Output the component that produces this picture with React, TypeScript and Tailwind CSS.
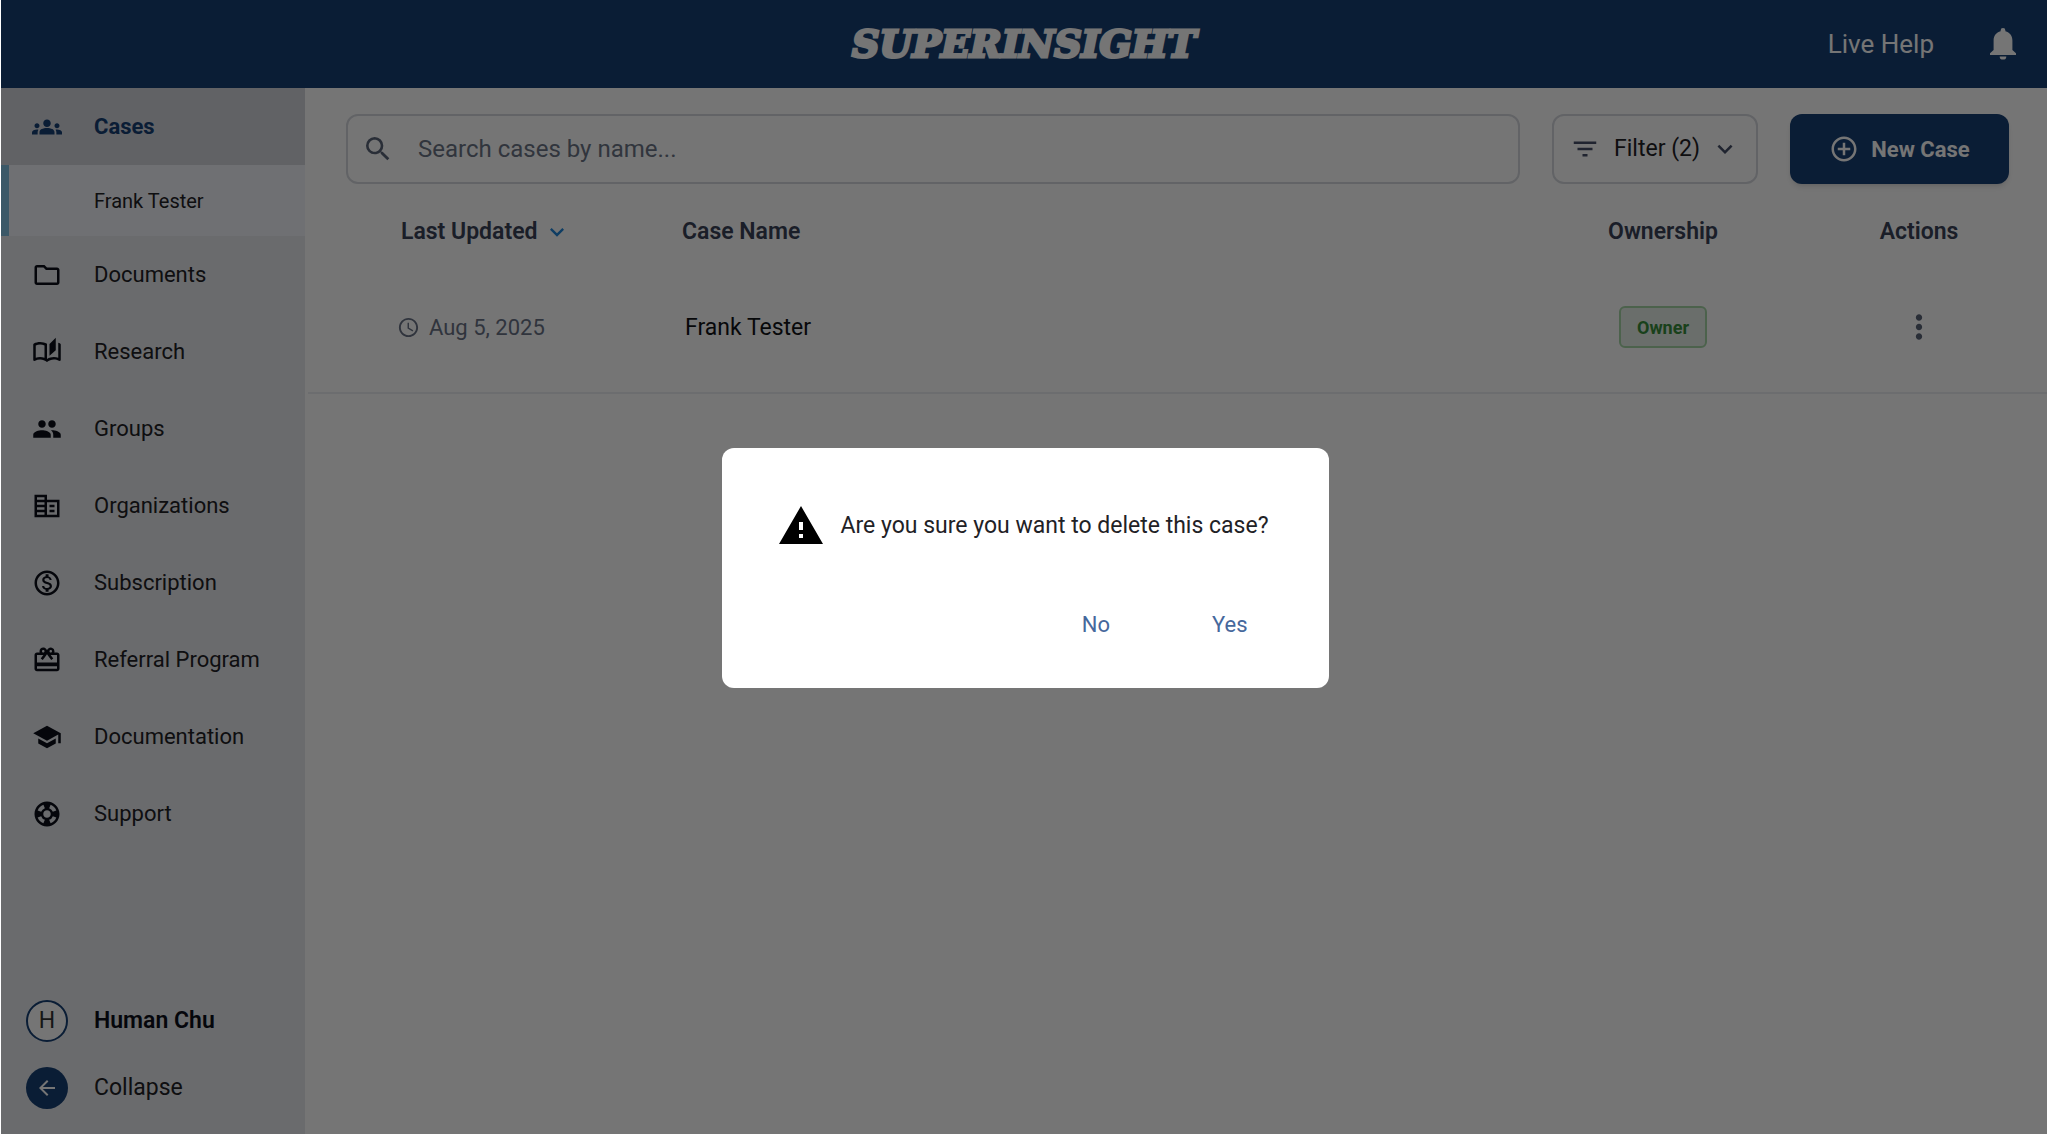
import React from "react";
import type { IconType } from "react-icons";
import {
  MdAccessTime,
  MdAddCircleOutline,
  MdArrowBack,
  MdFilterList,
  MdGroups,
  MdKeyboardArrowDown,
  MdMoreVert,
  MdOutlineAutoStories,
  MdOutlineCorporateFare,
  MdOutlineFolder,
  MdOutlineMonetizationOn,
  MdOutlineSupport,
  MdPeople,
  MdRedeem,
  MdSchool,
  MdSearch,
} from "react-icons/md";

const links: { label: string; icon: IconType }[] = [
  { label: "Documents", icon: MdOutlineFolder },
  { label: "Research", icon: MdOutlineAutoStories },
  { label: "Groups", icon: MdPeople },
  { label: "Organizations", icon: MdOutlineCorporateFare },
  { label: "Subscription", icon: MdOutlineMonetizationOn },
  { label: "Referral Program", icon: MdRedeem },
  { label: "Documentation", icon: MdSchool },
  { label: "Support", icon: MdOutlineSupport },
];

function BellIcon() {
  return (
    <svg viewBox="0 0 26 32" className="h-8 w-[26px]" fill="currentColor" aria-hidden="true">
      <path d="M13 0a2.4 2.4 0 0 0-2.4 2.4v.9C6.200 4.400 3.600 8 3.600 12.500V22L0 25.200V27h26v-1.800L22.400 22v-9.500c0-4.500-2.600-8.100-7-9.200v-.9A2.400 2.400 0 0 0 13 0z" />
      <path d="M9.700 28.400h6.600a3.300 3.200 0 0 1-6.600 0z" />
    </svg>
  );
}

function WarningIcon() {
  return (
    <svg viewBox="0 0 22 19" className="h-[38px] w-11 shrink-0" aria-hidden="true">
      <path d="M0 19h22L11 0 0 19zm12-3h-2v-2h2v2zm0-4h-2V8h2v4z" fill="#000" />
    </svg>
  );
}

function Header() {
  return (
    <header className="grid h-[88px] grid-cols-[1fr_auto_1fr] items-center bg-[#163f74] text-white">
      <a
        href="#home"
        className="col-start-2 font-['DejaVu_Serif',serif] text-[38px] leading-none font-bold italic [-webkit-text-stroke:3px_white]"
      >
        SUPERINSIGHT
      </a>
      <div className="flex items-center justify-end gap-14 pr-[31px]">
        <a href="#help" className="text-[26px] leading-8">
          Live Help
        </a>
        <button type="button" aria-label="Notifications">
          <BellIcon />
        </button>
      </div>
    </header>
  );
}

function Sidebar() {
  return (
    <aside className="flex w-[304px] shrink-0 flex-col bg-[#e6e9ed] pb-[25px] text-[22px] text-[#1f2226]">
      <nav className="flex flex-col">
        <a href="#cases" className="flex h-[77px] items-center gap-8 bg-[#d3d5dd] pl-[31px] font-bold text-[#163f74]">
          <MdGroups className="size-[30px]" />
          Cases
        </a>
        <a
          href="#frank-tester"
          className="flex h-[71px] items-center border-l-8 border-[#82bfe0] bg-[#f1f5fa] pl-[85px] text-[20px]"
        >
          Frank Tester
        </a>
        {links.map(({ label, icon: Icon }) => (
          <a key={label} href={"#" + label} className="flex h-[77px] items-center gap-8 pl-[31px]">
            <Icon className="size-[30px] text-[#0b0e1a]" />
            {label}
          </a>
        ))}
      </nav>
      <div className="mt-auto flex flex-col gap-[25px] pl-[25px] text-[23px] leading-9">
        <button type="button" className="flex items-center gap-[26px] font-semibold text-[#0b0e1a]">
          <span className="flex size-[42px] items-center justify-center rounded-full border-2 border-[#163f74] bg-white font-normal text-[#333]">
            H
          </span>
          Human Chu
        </button>
        <button type="button" className="flex items-center gap-[26px]">
          <span className="flex size-[42px] items-center justify-center rounded-full bg-[#163f74] text-white">
            <MdArrowBack className="size-6" />
          </span>
          Collapse
        </button>
      </div>
    </aside>
  );
}

function Toolbar() {
  return (
    <div className="flex gap-8 pt-[26px] pr-[38px] pl-[41px]">
      <label className="flex h-[70px] flex-1 items-center gap-6 rounded-xl border-2 border-[#d5d8de] pl-[14px] text-[#5b6478]">
        <MdSearch className="size-8" />
        <input
          type="search"
          aria-label="Search cases"
          placeholder="Search cases by name..."
          className="flex-1 bg-transparent text-[24px] outline-none placeholder:text-[#6b7486]"
        />
      </label>
      <button
        type="button"
        className="flex h-[70px] w-[206px] items-center justify-center gap-[14px] rounded-xl border-2 border-[#d5d8de] text-[23px] leading-9 text-[#1f2226]"
      >
        <MdFilterList className="size-[30px] text-[#475069]" />
        Filter (2)
        <MdKeyboardArrowDown className="-ml-1 size-[30px] text-[#475069]" />
      </button>
      <button
        type="button"
        className="flex h-[70px] w-[219px] items-center justify-center gap-3 rounded-xl bg-[#163f74] text-[22px] font-bold text-white shadow-md"
      >
        <MdAddCircleOutline className="size-[30px]" />
        New Case
      </button>
    </div>
  );
}

function CasesTable() {
  return (
    <table className="mt-[18px] ml-[3px] w-[calc(100%-3px)] table-fixed text-left text-[22px]">
      <colgroup>
        <col className="w-[374px]" />
        <col />
        <col className="w-[256px]" />
        <col className="w-[256px]" />
      </colgroup>
      <thead>
        <tr className="h-[60px] text-[23px] leading-9 text-[#3a4358]">
          <th className="pl-[93px] font-semibold">
            <button type="button" className="flex items-center gap-1.5">
              Last Updated
              <MdKeyboardArrowDown className="size-7 text-[#2186d8]" />
            </button>
          </th>
          <th className="font-semibold">Case Name</th>
          <th className="text-center font-semibold">Ownership</th>
          <th className="text-center font-semibold">Actions</th>
        </tr>
      </thead>
      <tbody>
        <tr className="h-[131px] border-b-2 border-[#eceef1]">
          <td className="pl-[89px] text-[#697286]">
            <span className="flex items-center gap-[9px]">
              <MdAccessTime className="size-[23px]" />
              Aug 5, 2025
            </span>
          </td>
          <td className="pl-[3px] text-[#111317]">
            <a href="#frank-tester" className="flex items-center pt-0.5 text-[23px] leading-9">
              Frank Tester
            </a>
          </td>
          <td className="text-center">
            <span className="inline-flex h-[42px] w-[88px] items-center justify-center rounded-md border-2 border-[#a5d6a7] bg-[#e8f0ea] align-middle text-[18px] font-bold text-[#388e3c]">
              Owner
            </span>
          </td>
          <td className="text-center">
            <button type="button" aria-label="Case actions" className="align-middle text-[#5b6478]">
              <MdMoreVert className="size-[38px]" />
            </button>
          </td>
        </tr>
      </tbody>
    </table>
  );
}

function DeleteDialog() {
  return (
    <div className="fixed inset-x-px inset-y-0 flex items-center justify-center bg-black/54 pt-0.5 pl-0.5">
      <div
        role="alertdialog"
        aria-modal="true"
        aria-labelledby="delete-message"
        className="flex w-[607px] flex-col gap-[55px] rounded-xl bg-white px-[57px] pt-[58px] pb-[39px] text-[22px]"
      >
        <div className="flex items-center gap-[18px]">
          <WarningIcon />
          <p id="delete-message" className="pt-0.5 text-[23px] leading-9 whitespace-nowrap text-[#1f2226]">
            Are you sure you want to delete this case?
          </p>
        </div>
        <div className="flex justify-end gap-[54px] text-[#46689c]">
          <button type="button" className="h-[50px] px-6">
            No
          </button>
          <button type="button" className="h-[50px] px-6">
            Yes
          </button>
        </div>
      </div>
    </div>
  );
}

export default function App() {
  return (
    <div className="flex min-h-screen flex-col bg-white px-px font-[Roboto,sans-serif]">
      <Header />
      <div className="flex flex-1">
        <Sidebar />
        <main className="min-w-0 flex-1">
          <Toolbar />
          <CasesTable />
        </main>
      </div>
      <DeleteDialog />
    </div>
  );
}
